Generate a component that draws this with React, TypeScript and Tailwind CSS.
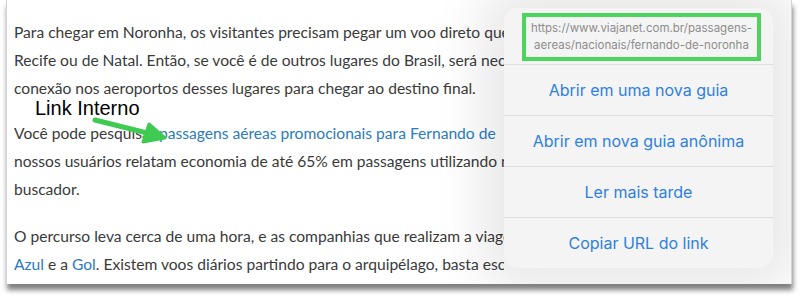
import { ReactNode } from 'react'

const lato = { fontFamily: 'Lato, "Noto Sans", sans-serif' }
const ios = { fontFamily: 'Inter, "Liberation Sans", sans-serif' }

function Line({ children }: { children: ReactNode }) {
  return <div className="whitespace-nowrap h-[28px] leading-[28px]">{children}</div>
}

function A({ children }: { children: ReactNode }) {
  return <span className="text-[#2a7bc0]">{children}</span>
}

const menuItems = [
  'Abrir em uma nova guia',
  'Abrir em nova guia anônima',
  'Ler mais tarde',
  'Copiar URL do link'
]

export default function App() {
  return (
    <div className="w-[800px] h-[304px] bg-white pl-[6px]">
      <div className="relative w-[786px] h-[284px] bg-white border-l border-r border-[#d4d4d4] shadow-[1px_6px_5px_rgba(0,0,0,0.5)] overflow-hidden">
        {/* article text, cut where the menu covers it */}
        <div className="w-[497px] overflow-hidden pl-[7px] pt-[18px] text-[15.6px] text-[#3a3a3a]" style={lato}>
          <div>
            <Line>Para chegar em Noronha, os visitantes precisam pegar um voo direto que</Line>
            <Line>Recife ou de Natal. Então, se você é de outros lugares do Brasil, será nece</Line>
            <Line>conexão nos aeroportos desses lugares para chegar ao destino final.</Line>
          </div>
          <div className="mt-[17px]">
            <Line>
              Você pode pesquisar <A>passagens aéreas promocionais para Fernando de</A>
            </Line>
            <Line>nossos usuários relatam economia de até 65% em passagens utilizando n</Line>
            <Line>buscador.</Line>
          </div>
          <div className="mt-[19px]">
            <Line>O percurso leva cerca de uma hora, e as companhias que realizam a viage</Line>
            <Line>
              <A>Azul</A> e a <A>Gol</A>. Existem voos diários partindo para o arquipélago, basta escolher o
            </Line>
          </div>
        </div>

        {/* annotation */}
        <div
          className="absolute left-[28px] top-[96px] text-[20px] leading-[24px] text-black"
          style={{ fontFamily: '"Liberation Sans", Arial, sans-serif' }}
        >
          Link Interno
        </div>
        <svg className="absolute left-[80px] top-[112px]" width="90" height="34" viewBox="0 0 90 34">
          <path d="M8 8 L64 22" stroke="#3fca52" strokeWidth="5" strokeLinecap="round" />
          <path d="M78 26 L56 30 L62 12 Z" fill="#3fca52" stroke="#3fca52" strokeWidth="3" strokeLinejoin="round" />
        </svg>

        {/* link context menu */}
        <div
          className="absolute left-[497px] top-[8px] w-[269px] h-[260px] rounded-[14px] bg-[#f4f4f4] shadow-[0_0_50px_24px_rgba(0,0,0,0.09)] flex flex-col"
          style={ios}
        >
          <div className="h-[57px] border-b border-[#dedede] pl-[18px] pr-[12px] pt-[5px]">
            <div className="h-[48px] border-[4px] border-[#4cd45c] flex flex-col items-center justify-center text-[11.5px] leading-[17px] text-[#8d8d8d]">
              <span>https://www.viajanet.com.br/passagens-</span>
              <span>aereas/nacionais/fernando-de-noronha</span>
            </div>
          </div>
          {menuItems.map((item, i) => (
            <div
              key={item}
              className={
                'flex-1 flex items-center justify-center text-[16px] text-[#2f80e0] ' +
                (i < menuItems.length - 1 ? 'border-b border-[#dedede]' : '')
              }
            >
              {item}
            </div>
          ))}
        </div>
      </div>
    </div>
  )
}
